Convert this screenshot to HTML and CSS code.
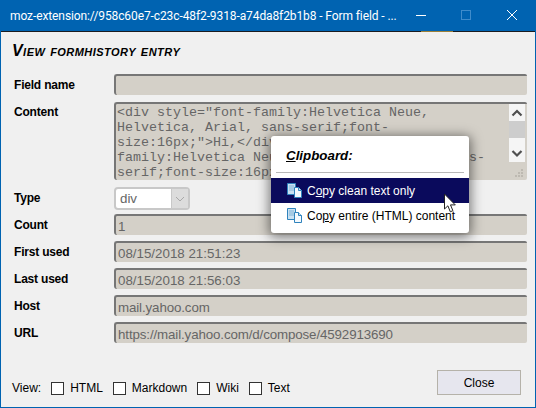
FILE: index.html
```html
<!DOCTYPE html>
<html lang="en">
<head>
    <meta charset="UTF-8">
    <meta name="viewport" content="width=device-width, initial-scale=1.0">
    <title>Form field</title>
    <link rel="stylesheet" href="styles.css">
</head>
<body>
    <div class="window">
        <div class="titlebar">
            <span class="title">moz-extension://958c60e7-c23c-48f2-9318-a74da8f2b1b8 - Form field - ...</span>
            <div class="win-buttons">
                <svg class="win-icon" width="46" height="31" viewBox="0 0 46 31"><path d="M18 15.5h10" stroke="#fff" fill="none"/></svg>
                <svg class="win-icon" width="46" height="31" viewBox="0 0 46 31"><rect x="17.5" y="10.5" width="9" height="9" stroke="#3f8ccb" fill="none"/></svg>
                <svg class="win-icon" width="46" height="31" viewBox="0 0 46 31"><path d="M17 10l10 10M27 10l-10 10" stroke="#fff" fill="none"/></svg>
            </div>
        </div>
        <div class="dark-line"></div>
        <div class="content">
            <h1 class="heading">View formhistory entry</h1>
            <div class="form">
                <div class="row">
                    <label class="label">Field name</label>
                    <div class="field"></div>
                </div>
                <div class="row row-content">
                    <label class="label">Content</label>
                    <div class="field field-area">
                        <div class="area-text">&lt;div style="font-family:Helvetica Neue,
Helvetica, Arial, sans-serif;font-
size:16px;"&gt;Hi,&lt;/div&gt;&lt;div style="font-
family:Helvetica Neue, Helvetica, Arial, sans-
serif;font-size:16px;"&gt;&lt;br&gt;&lt;/div&gt;</div>
                        <div class="scrollbar">
                            <svg width="16" height="17" viewBox="0 0 16 17"><path d="M3.5 11.5l4.5-4.5 4.5 4.5" stroke="#505050" stroke-width="2.2" fill="none"/></svg>
                            <div class="scroll-track"><div class="scroll-thumb"></div></div>
                            <svg width="16" height="17" viewBox="0 0 16 17"><path d="M3.5 6l4.5 4.5 4.5-4.5" stroke="#505050" stroke-width="2.2" fill="none"/></svg>
                        </div>
                        <svg class="grip" width="10" height="10" viewBox="0 0 10 10"><path d="M7 1h2v2H7zM4 4h2v2H4zM7 4h2v2H7zM1 7h2v2H1zM4 7h2v2H4zM7 7h2v2H7z" fill="#bdb9b1"/></svg>
                    </div>
                </div>
                <div class="row row-type">
                    <label class="label">Type</label>
                    <div class="select">
                        <span class="select-value">div</span>
                        <span class="select-arrow"><svg width="10" height="6" viewBox="0 0 10 6"><path d="M1 1l4 4 4-4" stroke="#a8a8a8" fill="none"/></svg></span>
                    </div>
                </div>
                <div class="row">
                    <label class="label">Count</label>
                    <div class="field">1</div>
                </div>
                <div class="row">
                    <label class="label">First used</label>
                    <div class="field">08/15/2018 21:51:23</div>
                </div>
                <div class="row">
                    <label class="label">Last used</label>
                    <div class="field">08/15/2018 21:56:03</div>
                </div>
                <div class="row">
                    <label class="label">Host</label>
                    <div class="field field-tight">mail.yahoo.com</div>
                </div>
                <div class="row">
                    <label class="label">URL</label>
                    <div class="field field-tight">https://mail.yahoo.com/d/compose/4592913690</div>
                </div>
            </div>
            <div class="footer">
                <div class="view-options">
                    <span class="view-label">View:</span>
                    <span class="check"><i class="box"></i>HTML</span>
                    <span class="check"><i class="box"></i>Markdown</span>
                    <span class="check"><i class="box"></i>Wiki</span>
                    <span class="check"><i class="box"></i>Text</span>
                </div>
                <button class="close-button">Close</button>
            </div>
        </div>
    </div>

    <div class="popup">
        <div class="popup-title"><u>C</u>lipboard:</div>
        <div class="popup-sep"></div>
        <div class="popup-item active">
            <svg width="17" height="17" viewBox="0 0 17 17"><use href="#copy-icon"/></svg>
            <span>C<u>o</u>py clean text only</span>
        </div>
        <div class="popup-item">
            <svg width="17" height="17" viewBox="0 0 17 17"><use href="#copy-icon"/></svg>
            <span>Co<u>p</u>y entire (HTML) content</span>
        </div>
    </div>

    <svg class="cursor" width="14" height="22" viewBox="0 0 14 22"><path d="M1.5 1v15l3.4-3.2 2.4 6 2.6-1.1-2.4-5.8h4.8z" fill="#fff" stroke="#222"/></svg>

    <svg width="0" height="0" class="defs">
        <symbol id="copy-icon" viewBox="0 0 17 17">
            <path d="M1.5 1.5h8v11h-8z" fill="#c9e1f2" stroke="#2f83bd"/>
            <path d="M3 4h5M3 6h5M3 8h5" stroke="#7fb2d6"/>
            <path d="M8.5 5.5h4l3 3v7h-7z" fill="#f4f9fd" stroke="#2f83bd"/>
            <path d="M12.5 5.5v3h3" fill="#c9e1f2" stroke="#2f83bd"/>
        </symbol>
    </svg>
</body>
</html>
```
FILE: styles.css
```css
* {
    box-sizing: border-box;
}
html, body {
    margin: 0;
    height: 100%;
    overflow: hidden;
}
body {
    position: relative;
    font-family: "Liberation Sans", Arial, sans-serif;
    font-size: 12px;
    color: #000;
}
.window {
    display: flex;
    flex-direction: column;
    width: 536px;
    height: 408px;
    background: #0063b1;
}
.titlebar {
    display: flex;
    align-items: center;
    justify-content: space-between;
    height: 31px;
    padding-left: 10px;
    color: #fff;
    font-family: Roboto, sans-serif;
    font-size: 12px;
    letter-spacing: -0.1px;
}
.title {
    white-space: nowrap;
}
.win-buttons {
    display: flex;
}
.win-icon {
    display: block;
}
.dark-line {
    height: 1px;
    margin: 0 1px;
    background: linear-gradient(90deg, #1a1c20 420px, #9a7f3a 420px, #9a7f3a 452px, #1a1c20 452px);
}
.content {
    flex: 1;
    margin: 0 1px 1px;
    padding: 10px 8px 12px 11px;
    background: #f0f0f0;
    display: flex;
    flex-direction: column;
}
.heading {
    margin: 0 0 14px;
    font-size: 16px;
    line-height: 18px;
    font-weight: bold;
    font-style: italic;
    font-variant: small-caps;
    letter-spacing: 0.45px;
}
.form {
    display: flex;
    flex-direction: column;
    gap: 6px;
}
.row {
    display: flex;
    align-items: flex-start;
}
.label {
    width: 102px;
    flex: none;
    padding: 4px 0 0 2px;
    font-weight: bold;
    line-height: 14px;
    letter-spacing: -0.2px;
}
.field {
    flex: 1;
    height: 21px;
    padding: 3px 2px 0;
    background: #d4d0c8;
    border-top: 2px solid #767676;
    border-left: 2px solid #767676;
    border-radius: 3px 2px 2px 3px;
    color: #666;
    line-height: 15px;
    font-size: 13.33px;
}
.field-tight {
    letter-spacing: -0.12px;
}
.row-content {
    margin-top: 1px;
}
.row-content .label {
    padding-top: 3px;
}
.field-area {
    position: relative;
    height: 78px;
    padding: 0;
    overflow: hidden;
}
.area-text {
    padding: 1px 0 0 1px;
    font-family: "Liberation Mono", monospace;
    font-size: 13.33px;
    line-height: 15px;
    white-space: pre;
    color: #666;
}
.scrollbar {
    position: absolute;
    top: 0;
    right: 2px;
    width: 16px;
    height: 58px;
    display: flex;
    flex-direction: column;
    background: #f5f5f5;
}
.scrollbar svg {
    display: block;
    flex: none;
}
.scroll-track {
    flex: 1;
}
.scroll-thumb {
    height: 17px;
    background: #cdcdcd;
}
.grip {
    position: absolute;
    right: 3px;
    bottom: 2px;
}
.row-type {
    margin-top: 1px;
    margin-bottom: -2px;
}
.select {
    display: flex;
    width: 76px;
    height: 23px;
    background: #fff;
    border: 2px solid #c8c8c8;
    border-radius: 4px;
    color: #666;
    font-size: 13.33px;
    line-height: 19px;
}
.select-value {
    flex: 1;
    padding-left: 4px;
}
.select-arrow {
    display: flex;
    align-items: center;
    justify-content: center;
    width: 17px;
    background: #dcdcdc;
    border-left: 1px solid #c8c8c8;
}
.footer {
    margin-top: auto;
    display: flex;
    align-items: flex-end;
    justify-content: space-between;
    padding-right: 6px;
}
.view-options {
    display: flex;
    align-items: center;
    gap: 10px;
    font-size: 12px;
}
.check {
    display: flex;
    align-items: center;
    gap: 6px;
}
.box {
    display: block;
    width: 13px;
    height: 13px;
    background: #fff;
    border: 1px solid #333;
}
.close-button {
    width: 84px;
    height: 25px;
    padding: 0;
    background: #e6e6ee;
    border: 1px solid #b5b2a9;
    font-family: "Liberation Sans", Arial, sans-serif;
    font-size: 12px;
    color: #000;
}
.popup {
    position: absolute;
    left: 271px;
    top: 136px;
    width: 198px;
    height: 97px;
    background: #fff;
    border-radius: 3px;
    box-shadow: 0 2px 12px 2px rgba(0, 0, 0, 0.5);
}
.popup-title {
    padding: 12px 0 0 15px;
    font-weight: bold;
    font-style: italic;
    font-size: 13.33px;
    line-height: 16px;
    height: 37px;
}
.popup-sep {
    height: 1px;
    margin: -1px 5px 0;
    background: #b8b8b8;
}
.popup-item {
    display: flex;
    align-items: center;
    gap: 4px;
    height: 25px;
    padding-left: 15px;
    font-size: 12px;
}
.popup-sep + .popup-item {
    margin-top: 5px;
}
.popup-item.active {
    background: #0a0a5c;
    color: #fff;
}
.popup-item svg {
    flex: none;
}
.cursor {
    position: absolute;
    left: 443px;
    top: 193px;
}
.defs {
    position: absolute;
}
```
